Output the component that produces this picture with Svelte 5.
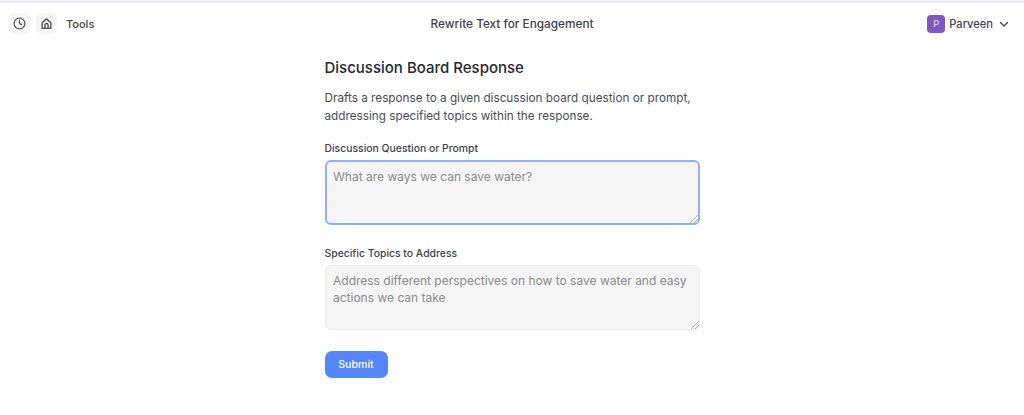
<script lang="ts">
    let question = $state("");
    let topics = $state("");
</script>

<div class="page">
    <header class="topbar">
        <div class="left">
            <button class="icon-btn" type="button" aria-label="History">
                <svg width="13" height="13" viewBox="0 0 24 24" fill="none" stroke="currentColor" stroke-width="2.3" stroke-linecap="round" stroke-linejoin="round">
                    <circle cx="12" cy="12" r="10"></circle>
                    <path d="M12 6v6l4 2"></path>
                </svg>
            </button>
            <button class="icon-btn" type="button" aria-label="Home">
                <svg width="13" height="13" viewBox="0 0 24 24" fill="none" stroke="currentColor" stroke-width="2.6" stroke-linecap="round" stroke-linejoin="round">
                    <path d="M4 10.5 12 3.5l8 7V21H4z"></path>
                    <path d="M9 21v-6a3 3 0 0 1 6 0v6"></path>
                </svg>
            </button>
            <span class="tools">Tools</span>
        </div>
        <div class="title">Rewrite Text for Engagement</div>
        <div class="user">
            <span class="avatar">P</span>
            <span class="name">Parveen</span>
            <svg class="chevron" width="12" height="12" viewBox="0 0 24 24" fill="none" stroke="currentColor" stroke-width="2.6" stroke-linecap="round" stroke-linejoin="round">
                <path d="m5 9 7 7 7-7"></path>
            </svg>
        </div>
    </header>

    <main class="form">
        <h1>Discussion Board Response</h1>
        <p class="desc">Drafts a response to a given discussion board question or prompt, addressing specified topics within the response.</p>

        <label class="field first">
            <span class="label">Discussion Question or Prompt</span>
            <textarea class="focused" bind:value={question} placeholder="What are ways we can save water?"></textarea>
        </label>

        <label class="field">
            <span class="label">Specific Topics to Address</span>
            <textarea bind:value={topics} placeholder="Address different perspectives on how to save water and easy actions we can take"></textarea>
        </label>

        <button class="submit" type="button">Submit</button>
    </main>
</div>

<style>
:global(body) {
    margin: 0;
    background: #fff;
    font-family: Inter, "Liberation Sans", sans-serif;
}

.page {
    height: 415px;
    overflow: hidden;
    border-top: 3px solid #f1eefa;
    box-sizing: border-box;
    color: #27272a;
}

.topbar {
    display: grid;
    grid-template-columns: 1fr auto 1fr;
    align-items: center;
    height: 41px;
    padding: 0 9px;
}

.left {
    display: flex;
    align-items: center;
    gap: 6px;
}

.icon-btn {
    display: flex;
    align-items: center;
    justify-content: center;
    width: 21px;
    height: 21px;
    padding: 0;
    border: none;
    border-radius: 5px;
    background: #f5f5f5;
    color: #52525b;
}

.tools {
    margin-left: 3px;
    font-size: 11px;
    font-weight: 500;
    color: #3f3f46;
}

.title {
    font-size: 11.8px;
    font-weight: 500;
    color: #3f3f46;
}

.user {
    display: flex;
    align-items: center;
    justify-content: flex-end;
    gap: 5px;
    margin-right: 5px;
    color: #3f3f46;
}

.avatar {
    display: flex;
    align-items: center;
    justify-content: center;
    width: 18px;
    height: 18px;
    margin-right: -1px;
    border-radius: 4px;
    background: #7e57c2;
    color: #e9e4f5;
    font-size: 9.5px;
}

.name {
    font-size: 11.1px;
    font-weight: 500;
}

.form {
    display: flex;
    flex-direction: column;
    align-items: flex-start;
    width: 375px;
    margin: 0 auto;
    padding-top: 14px;
}

h1 {
    margin: 0;
    font-size: 15px;
    line-height: 20px;
    font-weight: 500;
    color: #27272a;
}

.desc {
    margin: 11px 0 0;
    font-size: 11.75px;
    line-height: 18px;
    color: #4b4b52;
}

.field {
    display: flex;
    flex-direction: column;
    width: 100%;
    margin-top: 22px;
}

.field.first {
    margin-top: 17px;
}

.label {
    font-size: 10.4px;
    line-height: 14px;
    font-weight: 500;
    margin-bottom: 4px;
    color: #3f3f46;
}

textarea {
    box-sizing: border-box;
    width: 100%;
    height: 65px;
    padding: 7px 7.5px;
    border: 1px solid #ececec;
    border-radius: 6px;
    background: #f5f5f5;
    font-family: inherit;
    font-size: 12px;
    line-height: 16.5px;
    color: #27272a;
    outline: none;
}

textarea::placeholder {
    color: #8a8a8a;
    opacity: 1;
}

textarea::-webkit-resizer {
    background: linear-gradient(135deg, transparent 0 15px, #b0b0b0 15px 16px, transparent 16px 18px, #b0b0b0 18px 19px, transparent 19px);
}

textarea.focused {
    border: 2px solid #93aefc;
    padding: 7px 6.5px;
}

.submit {
    margin-top: 21px;
    width: 63px;
    height: 27px;
    border: none;
    border-radius: 7px;
    background: #5686fd;
    color: #fff;
    font-family: inherit;
    font-size: 10.6px;
    font-weight: 500;
}
</style>
